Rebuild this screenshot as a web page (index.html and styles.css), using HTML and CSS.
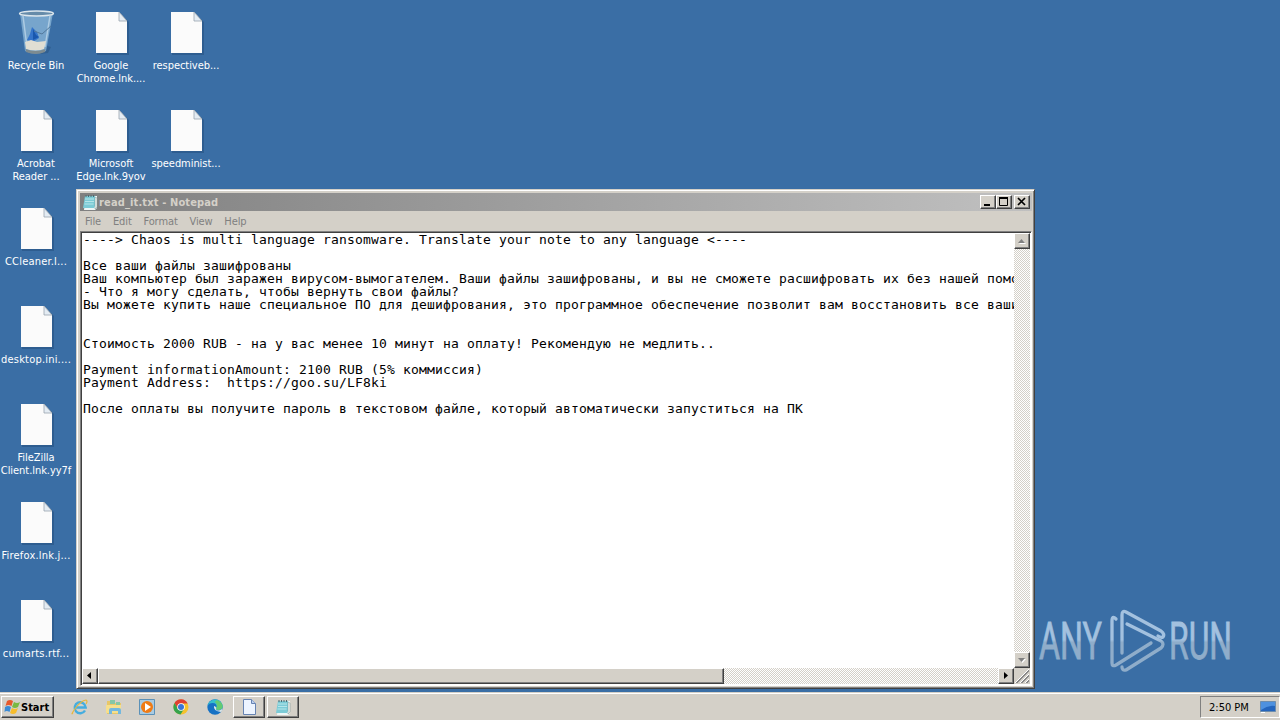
FILE: index.html
```html
<!DOCTYPE html>
<html lang="en">
<head>
    <meta charset="UTF-8">
    <title>Desktop</title>
    <link rel="stylesheet" href="styles.css">
</head>
<body>
    <svg class="defs" width="0" height="0">
        <symbol id="page" viewBox="0 0 34 44">
            <path d="M2 2h23l9 9v33H2z" fill="#24507f" opacity=".55"/>
            <path d="M1 1h23l8 9v32H1z" fill="#fbfbfb"/>
            <path d="M24 1v9h8z" fill="#e4ecf3" stroke="#9aa5ae" stroke-width=".8"/>
        </symbol>
        <symbol id="notepad" viewBox="0 0 16 16">
            <path d="M4 2h11v12l-2 2H2z" fill="#edf6f6"/>
            <path d="M3 2h10v10l-1 2H1z" fill="#7ccbd6"/>
            <path d="M3 5h9M3 7.500h9M2.500 10h9" stroke="#b5e6ea"/>
            <path d="M13 3l2 1v9l-2 2z" fill="#f5f5ef" stroke="#719095" stroke-width=".5"/>
            <path d="M4 1v2M6.500 1v2M9 1v2M11.500 1v2" stroke="#506a70"/>
        </symbol>
    </svg>

    <main class="desktop">
        <div class="icon-column">
            <div class="shortcut">
                <svg class="bin" width="38" height="46" viewBox="0 0 38 46">
                    <path d="M26 36l7 2-3 6-8 1z" fill="#20456e" opacity=".35"/>
                    <path d="M2 4L7 42q10 5 21 0L35 4z" fill="#83afd2" opacity=".85"/>
                    <path d="M5 7l4 31M32 7l-5 31" stroke="#c4dced" stroke-width="1.500" opacity=".7"/>
                    <path d="M14 18l5 5 2 6-6 4-6-2 3-6z" fill="#3474ca"/>
                    <path d="M15 20l3 6 3 2-6 3z" fill="#1957ae"/>
                    <path d="M33 17L24 25l-8-3" fill="none" stroke="#53799c"/>
                    <path d="M7 33l6-2 6 2 9-1-2 8q-8 3-18 0z" fill="#e0ded3"/>
                    <path d="M7.500 40q10 4 20 0l-.5 3q-9 4-19 0z" fill="#7d8b90"/>
                    <ellipse cx="18.500" cy="4.500" rx="17" ry="2.500" fill="#668ba9" stroke="#dce6ec" stroke-width="1.300"/>
                </svg>
                <span>Recycle Bin</span>
            </div>
            <div class="shortcut"><svg><use href="#page"/></svg><span>Acrobat<br>Reader ...</span></div>
            <div class="shortcut wide"><svg><use href="#page"/></svg><span>CCleaner.l...</span></div>
            <div class="shortcut wide"><svg><use href="#page"/></svg><span>desktop.ini....</span></div>
            <div class="shortcut"><svg><use href="#page"/></svg><span>FileZilla<br>Client.lnk.yy7f</span></div>
            <div class="shortcut wide"><svg><use href="#page"/></svg><span>Firefox.lnk.j...</span></div>
            <div class="shortcut wide"><svg><use href="#page"/></svg><span>cumarts.rtf...</span></div>
        </div>
        <div class="icon-column">
            <div class="shortcut"><svg><use href="#page"/></svg><span>Google<br>Chrome.lnk....</span></div>
            <div class="shortcut"><svg><use href="#page"/></svg><span>Microsoft<br>Edge.lnk.9yov</span></div>
        </div>
        <div class="icon-column">
            <div class="shortcut"><svg><use href="#page"/></svg><span>respectiveb...</span></div>
            <div class="shortcut"><svg><use href="#page"/></svg><span>speedminist...</span></div>
        </div>

        <section class="window">
            <header class="titlebar">
                <svg width="16" height="16"><use href="#notepad"/></svg>
                <span class="title">read_it.txt - Notepad</span>
                <button class="raised"><svg width="12" height="10"><path d="M2 8h6" stroke="#000" stroke-width="2"/></svg></button>
                <button class="raised"><svg width="12" height="10"><path d="M1.500 1v7.500h8V1" fill="none" stroke="#000"/><path d="M1 1h9" stroke="#000" stroke-width="2"/></svg></button>
                <button class="raised close"><svg width="12" height="10"><path d="M2 1l7 7M9 1L2 8" stroke="#000" stroke-width="1.700"/></svg></button>
            </header>
            <nav class="menu">
                <span>File</span><span>Edit</span><span>Format</span><span>View</span><span>Help</span>
            </nav>
            <div class="editor">
                <pre class="note">----&gt; Chaos is multi language ransomware. Translate your note to any language &lt;----

Все ваши файлы зашифрованы
Ваш компьютер был заражен вирусом-вымогателем. Ваши файлы зашифрованы, и вы не сможете расшифровать их без нашей помо
- Что я могу сделать, чтобы вернуть свои файлы?
Вы можете купить наше специальное ПО для дешифрования, это программное обеспечение позволит вам восстановить все ваши


Стоимость 2000 RUB - на у вас менее 10 минут на оплату! Рекомендую не медлить..

Payment informationAmount: 2100 RUB (5% коммиссия)
Payment Address:  https://goo.su/LF8ki

После оплаты вы получите пароль в текстовом файле, который автоматически запуститься на ПК</pre>
                <div class="vscroll">
                    <div class="raised arrow"><svg width="12" height="12"><path d="M3 9h7L6.500 5z" fill="#fff"/><path d="M2 8h7L5.500 4z" fill="#808080"/></svg></div>
                    <div class="raised arrow"><svg width="12" height="12"><path d="M3 5h7L6.500 9z" fill="#fff"/><path d="M2 4h7L5.500 8z" fill="#808080"/></svg></div>
                </div>
                <div class="hscroll">
                    <div class="raised arrow"><svg width="12" height="12"><path d="M7 2v7L3 5.500z"/></svg></div>
                    <div class="raised thumb"></div>
                    <div class="raised arrow right"><svg width="12" height="12"><path d="M4 2v7l4-3.500z"/></svg></div>
                </div>
                <svg class="grip" width="16" height="16"><path d="M1 15L15 1M6 15l9-9M11 15l4-4" stroke="#fff"/><path d="M2 15L15 2M3 15L15 3M7 15l8-8M8 15l7-7M12 15l3-3M13 15l2-2" stroke="#808080" stroke-width=".9"/></svg>
            </div>
        </section>

        <svg class="watermark" width="200" height="64" viewBox="0 0 200 64">
            <defs>
                <linearGradient id="fade" gradientUnits="userSpaceOnUse" x1="0" y1="0" x2="0" y2="64">
                    <stop offset=".48" stop-color="#a3c1df"/>
                    <stop offset=".52" stop-color="#8fadca"/>
                </linearGradient>
            </defs>
            <g fill="url(#fade)" stroke="url(#fade)" stroke-width=".8">
                <text x="1" y="50" textLength="63" lengthAdjust="spacingAndGlyphs">ANY</text>
                <text x="131" y="50" textLength="63" lengthAdjust="spacingAndGlyphs">RUN</text>
            </g>
            <g fill="none" stroke="url(#fade)" stroke-width="3.300" stroke-linejoin="round" stroke-linecap="round">
                <path d="M78 10q-4-4-4 2v42q0 4 4 2l35-22"/>
                <path d="M84 44V6q0-5 4-3l35 19q4 3 2 6-2 1-5-1"/>
                <path d="M89 15l34 17q4 3 0 7L88 61q-4 1-4-3"/>
            </g>
        </svg>
    </main>

    <footer class="taskbar">
        <button class="raised start">
            <svg width="17" height="16" viewBox="0 0 17 16">
                <path d="M3 2q3-2 6 0L7.500 7q-3-2-6 0z" fill="#e7592b"/>
                <path d="M10 3q3 2 6 0l-2 5q-3 2-6 0z" fill="#79b943"/>
                <path d="M1 8q3-2 6 0l-1.500 5q-3-2-5 0z" fill="#3b8bd5"/>
                <path d="M8 9q3 2 6 0l-2 5q-3 2-6 0z" fill="#f7bd2c"/>
            </svg>
            <span>Start</span>
        </button>
        <div class="quick">
            <svg width="18" height="18" viewBox="0 0 18 18">
                <path d="M14 12.500a5.500 5.500 0 1 1 .7-3H5" fill="none" stroke="#45addf" stroke-width="2.400"/>
                <path d="M2 15C-2 20 7 3 15 2q2 1 0 4" fill="none" stroke="#e8b73d" stroke-width="1.200"/>
            </svg>
            <svg width="18" height="18" viewBox="0 0 18 18">
                <path d="M2 3h6l1 2h7v11H2z" fill="#e8c768"/>
                <path d="M5 2h5v4H5zM11 4h4v3h-4z" fill="#85c7a7"/>
                <path d="M1 7h15v8H1z" fill="#f6df8d"/>
                <path d="M4 16v-4q0-2 2-2h8q2 0 2 2v4h-3v-3H7v3z" fill="#73b8df"/>
            </svg>
            <svg width="18" height="18" viewBox="0 0 18 18">
                <path d="M1.500 1.500h15v15h-15z" fill="#a9cbe2" stroke="#5b91b8"/>
                <circle cx="9" cy="9" r="6" fill="#ef7b15"/>
                <path d="M7 5l6 4-6 4z" fill="#fff"/>
            </svg>
            <svg width="18" height="18" viewBox="0 0 18 18">
                <circle cx="9" cy="9" r="7.500" fill="#f5c22d"/>
                <path d="M2.500 5A7.500 7.500 0 0 1 15.700 5.500H9L5.800 11z" fill="#df4032"/>
                <path d="M2.500 5A7.500 7.500 0 0 0 8.500 16.500L12 11H6z" fill="#35a34c"/>
                <circle cx="9" cy="9" r="3.800" fill="#fff"/>
                <circle cx="9" cy="9" r="3" fill="#3975d6"/>
            </svg>
            <svg width="18" height="18" viewBox="0 0 18 18">
                <circle cx="9" cy="9" r="7.700" fill="#1671c4"/>
                <path d="M1.500 8C3 0 15-1 16.700 8q0 4-5 4-3-1-1-3 0-4-4-4-4 0-5.200 3z" fill="#36bfcd"/>
                <path d="M11 2q5 2 5.700 6 0 4-5 4l-2-1 1-2q1-3-2-5z" fill="#64ca72"/>
                <path d="M8 8q-1 5 7 6 2-2 1-3-5 3-6 0 1-2-2-3z" fill="#d7e4e7"/>
            </svg>
        </div>
        <button class="raised task">
            <svg width="18" height="18" viewBox="0 0 18 18"><path d="M3.500 1.500h8l4 4v11h-12z" fill="#edf4ff" stroke="#6683b2"/><path d="M11.500 1.500v4h4" fill="#bdd0ef" stroke="#6683b2"/></svg>
        </button>
        <button class="raised task"><svg width="16" height="16"><use href="#notepad"/></svg></button>
        <div class="tray">
            <span>2:50 PM</span>
            <svg width="16" height="14" viewBox="0 0 16 14"><path d="M.5 1.500h15v10H.5z" fill="#2465bd" stroke="#6d8dad"/><path d="M1 2h14v4Q8 5 1 10z" fill="#4e91df"/><path d="M1 12.500h4" stroke="#fff"/></svg>
        </div>
    </footer>
</body>
</html>
```
FILE: styles.css
```css
* {
    box-sizing: border-box;
    margin: 0;
    padding: 0;
}

body {
    width: 1280px;
    height: 720px;
    overflow: hidden;
    display: flex;
    flex-direction: column;
    background: #3a6ea5;
    font-family: "DejaVu Sans Condensed", "DejaVu Sans", sans-serif;
    font-stretch: condensed;
    font-size: 11px;
}

svg {
    display: block;
    flex: none;
}

.defs {
    position: absolute;
}

.desktop {
    position: relative;
    display: flex;
    height: 692px;
}

.icon-column {
    width: 75px;
    padding-top: 8px;
}

.shortcut {
    width: 72px;
    height: 98px;
    padding-top: 3px;
    display: flex;
    flex-direction: column;
    align-items: center;
    color: #fff;
    line-height: 13px;
    text-align: center;
    white-space: nowrap;
    letter-spacing: -0.05px;
}

.wide {
    letter-spacing: 0.2px;
}

.shortcut svg {
    width: 34px;
    height: 44px;
    margin-left: 1px;
    margin-bottom: 4px;
}

.shortcut .bin {
    width: 38px;
    height: 46px;
    margin-top: -2px;
}

/* classic bevel, shared by buttons and scrollbars */
.raised {
    background: #d4d0c8;
    border: 1px solid;
    border-color: #fff #404040 #404040 #fff;
    box-shadow: inset -1px -1px #808080;
}

.window {
    position: absolute;
    left: 76px;
    top: 189px;
    width: 959px;
    height: 500px;
    padding: 2px 2px 2px 3px;
    background: #d4d0c8;
    border: 1px solid;
    border-color: #d4d0c8 #404040 #404040 #d4d0c8;
    box-shadow: inset 1px 1px #fff, inset -1px -1px #808080;
}

.titlebar {
    display: flex;
    height: 18px;
    margin-top: 1px;
    padding: 1px 2px;
    background: linear-gradient(90deg, #808080, #c0c0c0);
}

.title {
    flex: 1;
    padding-left: 1px;
    color: #d4d0c8;
    font-weight: bold;
    line-height: 17px;
    letter-spacing: 0.14px;
}

.titlebar button {
    width: 16px;
    height: 14px;
    margin-top: 1px;
    padding: 1px;
}

.titlebar .close {
    margin-left: 2px;
}

.menu {
    display: flex;
    gap: 11.8px;
    height: 20px;
    padding-left: 5px;
    color: #808080;
    line-height: 21px;
    letter-spacing: -0.1px;
}

.editor {
    display: grid;
    grid-template-columns: 1fr 16px;
    grid-template-rows: 1fr 16px;
    height: 455px;
    background: #fff;
    border: 1px solid;
    border-color: #808080 #fff #fff #808080;
    box-shadow: inset 1px 1px #404040;
    padding: 1px;
}

.note {
    overflow: hidden;
    padding-left: 1px;
    font-family: "DejaVu Sans Mono", monospace;
    font-size: 13px;
    line-height: 13px;
    letter-spacing: 0.174px;
}

.vscroll,
.hscroll {
    display: flex;
    background: repeating-conic-gradient(#d4d0c8 0 25%, #fff 0 50%) 0 0 / 2px 2px;
}

.vscroll {
    flex-direction: column;
    justify-content: space-between;
}

.arrow {
    width: 16px;
    height: 16px;
    padding: 1px;
}

.thumb {
    width: 626px;
}

.right {
    margin-left: auto;
}

.grip {
    background: #d4d0c8;
}

.watermark {
    position: absolute;
    left: 1038px;
    top: 609px;
    overflow: visible;
    font: 52px Roboto, sans-serif;
}

.taskbar {
    display: flex;
    align-items: center;
    height: 28px;
    padding: 3px 0 1px 1px;
    background: #d4d0c8;
    box-shadow: inset 0 1px #d4d0c8, inset 0 2px #fff;
}

.start {
    display: flex;
    align-items: center;
    width: 53px;
    height: 22px;
    padding-left: 2px;
    font: bold 11px "DejaVu Sans Condensed", "DejaVu Sans", sans-serif;
}

.quick {
    display: flex;
    gap: 15.7px;
    margin-left: 17px;
    width: 162px;
}

.task {
    display: flex;
    align-items: center;
    justify-content: center;
    width: 32px;
    height: 22px;
    margin-right: 2px;
}

.tray {
    display: flex;
    align-items: center;
    justify-content: space-between;
    width: 80px;
    height: 22px;
    margin-left: auto;
    padding: 0 3px 0 8px;
    border: 1px solid;
    border-color: #808080 #fff #fff #808080;
}
```
